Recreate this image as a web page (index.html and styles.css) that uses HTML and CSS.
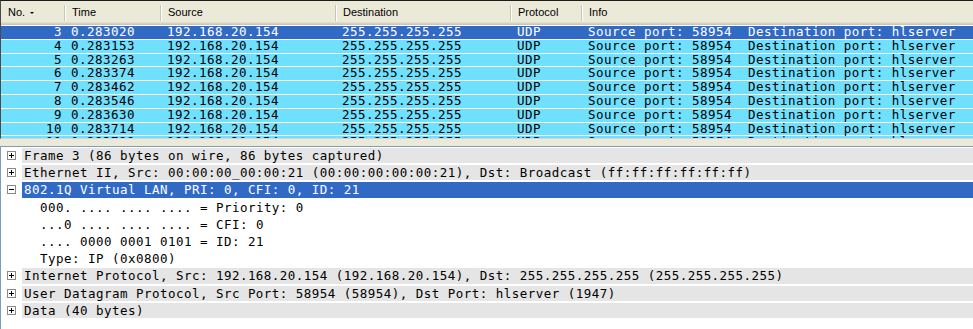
FILE: index.html
```html
<!DOCTYPE html>
<html lang="en">
<head>
    <meta charset="UTF-8">
    <title>Packet capture</title>
    <link rel="stylesheet" href="styles.css">
</head>
<body>
    <div class="packet-list">
        <div class="list-head">
            <div class="col-head">No.<span class="sort-arrow"></span></div>
            <div class="col-head">Time</div>
            <div class="col-head">Source</div>
            <div class="col-head">Destination</div>
            <div class="col-head">Protocol</div>
            <div class="col-head">Info</div>
        </div>
        <div class="list-body">
            <div class="pkt selected"><span class="num">3</span><span>0.283020</span><span>192.168.20.154</span><span>255.255.255.255</span><span>UDP</span><span>Source port: 58954  Destination port: hlserver</span></div>
            <div class="pkt"><span class="num">4</span><span>0.283153</span><span>192.168.20.154</span><span>255.255.255.255</span><span>UDP</span><span>Source port: 58954  Destination port: hlserver</span></div>
            <div class="pkt"><span class="num">5</span><span>0.283263</span><span>192.168.20.154</span><span>255.255.255.255</span><span>UDP</span><span>Source port: 58954  Destination port: hlserver</span></div>
            <div class="pkt"><span class="num">6</span><span>0.283374</span><span>192.168.20.154</span><span>255.255.255.255</span><span>UDP</span><span>Source port: 58954  Destination port: hlserver</span></div>
            <div class="pkt"><span class="num">7</span><span>0.283462</span><span>192.168.20.154</span><span>255.255.255.255</span><span>UDP</span><span>Source port: 58954  Destination port: hlserver</span></div>
            <div class="pkt"><span class="num">8</span><span>0.283546</span><span>192.168.20.154</span><span>255.255.255.255</span><span>UDP</span><span>Source port: 58954  Destination port: hlserver</span></div>
            <div class="pkt"><span class="num">9</span><span>0.283630</span><span>192.168.20.154</span><span>255.255.255.255</span><span>UDP</span><span>Source port: 58954  Destination port: hlserver</span></div>
            <div class="pkt"><span class="num">10</span><span>0.283714</span><span>192.168.20.154</span><span>255.255.255.255</span><span>UDP</span><span>Source port: 58954  Destination port: hlserver</span></div>
            <div class="pkt"><span class="num">11</span><span>0.283798</span><span>192.168.20.154</span><span>255.255.255.255</span><span>UDP</span><span>Source port: 58954  Destination port: hlserver</span></div>
        </div>
    </div>

    <div class="splitter"></div>

    <div class="packet-details">
        <div class="node">
            <span class="toggle"><svg width="9" height="9" viewBox="0 0 9 9"><rect x="0.5" y="0.5" width="8" height="8" fill="#fff" stroke="#8a8a8a"/><path d="M2 4.5h5M4.5 2v5" stroke="#000"/></svg></span>
            <span class="summary">Frame 3 (86 bytes on wire, 86 bytes captured)</span>
        </div>
        <div class="node">
            <span class="toggle"><svg width="9" height="9" viewBox="0 0 9 9"><rect x="0.5" y="0.5" width="8" height="8" fill="#fff" stroke="#8a8a8a"/><path d="M2 4.5h5M4.5 2v5" stroke="#000"/></svg></span>
            <span class="summary">Ethernet II, Src: 00:00:00_00:00:21 (00:00:00:00:00:21), Dst: Broadcast (ff:ff:ff:ff:ff:ff)</span>
        </div>
        <div class="node selected">
            <span class="toggle"><svg width="9" height="9" viewBox="0 0 9 9"><rect x="0.5" y="0.5" width="8" height="8" fill="#fff" stroke="#8a8a8a"/><path d="M2 4.5h5" stroke="#000"/></svg></span>
            <span class="summary">802.1Q Virtual LAN, PRI: 0, CFI: 0, ID: 21</span>
        </div>
        <div class="field">000. .... .... .... = Priority: 0</div>
        <div class="field">...0 .... .... .... = CFI: 0</div>
        <div class="field">.... 0000 0001 0101 = ID: 21</div>
        <div class="field">Type: IP (0x0800)</div>
        <div class="node">
            <span class="toggle"><svg width="9" height="9" viewBox="0 0 9 9"><rect x="0.5" y="0.5" width="8" height="8" fill="#fff" stroke="#8a8a8a"/><path d="M2 4.5h5M4.5 2v5" stroke="#000"/></svg></span>
            <span class="summary">Internet Protocol, Src: 192.168.20.154 (192.168.20.154), Dst: 255.255.255.255 (255.255.255.255)</span>
        </div>
        <div class="node">
            <span class="toggle"><svg width="9" height="9" viewBox="0 0 9 9"><rect x="0.5" y="0.5" width="8" height="8" fill="#fff" stroke="#8a8a8a"/><path d="M2 4.5h5M4.5 2v5" stroke="#000"/></svg></span>
            <span class="summary">User Datagram Protocol, Src Port: 58954 (58954), Dst Port: hlserver (1947)</span>
        </div>
        <div class="node">
            <span class="toggle"><svg width="9" height="9" viewBox="0 0 9 9"><rect x="0.5" y="0.5" width="8" height="8" fill="#fff" stroke="#8a8a8a"/><path d="M2 4.5h5M4.5 2v5" stroke="#000"/></svg></span>
            <span class="summary">Data (40 bytes)</span>
        </div>
    </div>
</body>
</html>
```

FILE: styles.css
```css
body {
    margin: 0;
    width: 973px;
    height: 329px;
    overflow: hidden;
    background: #fff;
    font-family: "DejaVu Sans Mono", monospace;
    font-size: 12.5px;
    letter-spacing: 0.47px;
    color: #000;
}

/* packet list */
.packet-list {
    height: 137px;
    border-top: 1px solid #1c1c1c;
    border-left: 1px solid #4a4a4a;
    border-bottom: 1px solid #c9d6e2;
    overflow: hidden;
    background: #fff;
}
.list-head,
.pkt {
    display: grid;
    grid-template-columns: 65px 96px 175px 175px 71px 1fr;
}
.list-head {
    height: 24px;
    margin-bottom: 1px;
    background:
        linear-gradient(#e2decd, #e2decd) left 21px / 100% 1px no-repeat,
        linear-gradient(#d6d2c2, #d6d2c2) left 22px / 100% 1px no-repeat,
        linear-gradient(#cbc7b8, #cbc7b8) left 23px / 100% 1px no-repeat,
        #ebe9d8;
}
.col-head {
    font-family: "Liberation Sans", Arial, sans-serif;
    font-size: 11px;
    letter-spacing: 0;
    line-height: 23px;
    padding-left: 6px;
    white-space: nowrap;
    background: linear-gradient(to right, #c7c5b2 0 1px, #fff 1px 2px) right 4px / 2px 16px no-repeat;
}
.col-head:first-child {
    padding-left: 7px;
}
.col-head:last-child {
    background: none;
}
.sort-arrow {
    display: inline-block;
    vertical-align: middle;
    margin-left: 5px;
    border-left: 2px solid transparent;
    border-right: 2px solid transparent;
    border-top: 2px solid #000;
}

.pkt {
    height: 12.8px;
    line-height: 12.8px;
    border-bottom: 1px solid #fff;
    background: #70e0ff;
    white-space: pre;
}
.pkt span {
    padding-left: 5px;
}
.pkt .num {
    padding-left: 0;
    padding-right: 4px;
    text-align: right;
}
.pkt.selected {
    background: #316ac5;
    color: #fff;
}

.splitter {
    height: 7px;
    background: #ece9d8;
}

/* packet details */
.packet-details {
    height: 182px;
    border-top: 1px solid #7f9db9;
    border-left: 1px solid #7f9db9;
    padding-top: 1px;
}
.node {
    display: flex;
    height: 15.2px;
    margin-bottom: 2px;
}
.toggle {
    width: 15px;
    padding-left: 6px;
    display: flex;
    align-items: center;
}
.toggle svg {
    display: block;
}
.summary {
    flex: 1;
    padding-left: 2px;
    line-height: 15.2px;
    white-space: pre;
    background: #e5e5e5;
}
.node.selected .summary {
    background: #316ac5;
    color: #fff;
}
.field {
    height: 15.2px;
    line-height: 15.2px;
    margin-bottom: 2px;
    padding-left: 39px;
    white-space: pre;
}
```
